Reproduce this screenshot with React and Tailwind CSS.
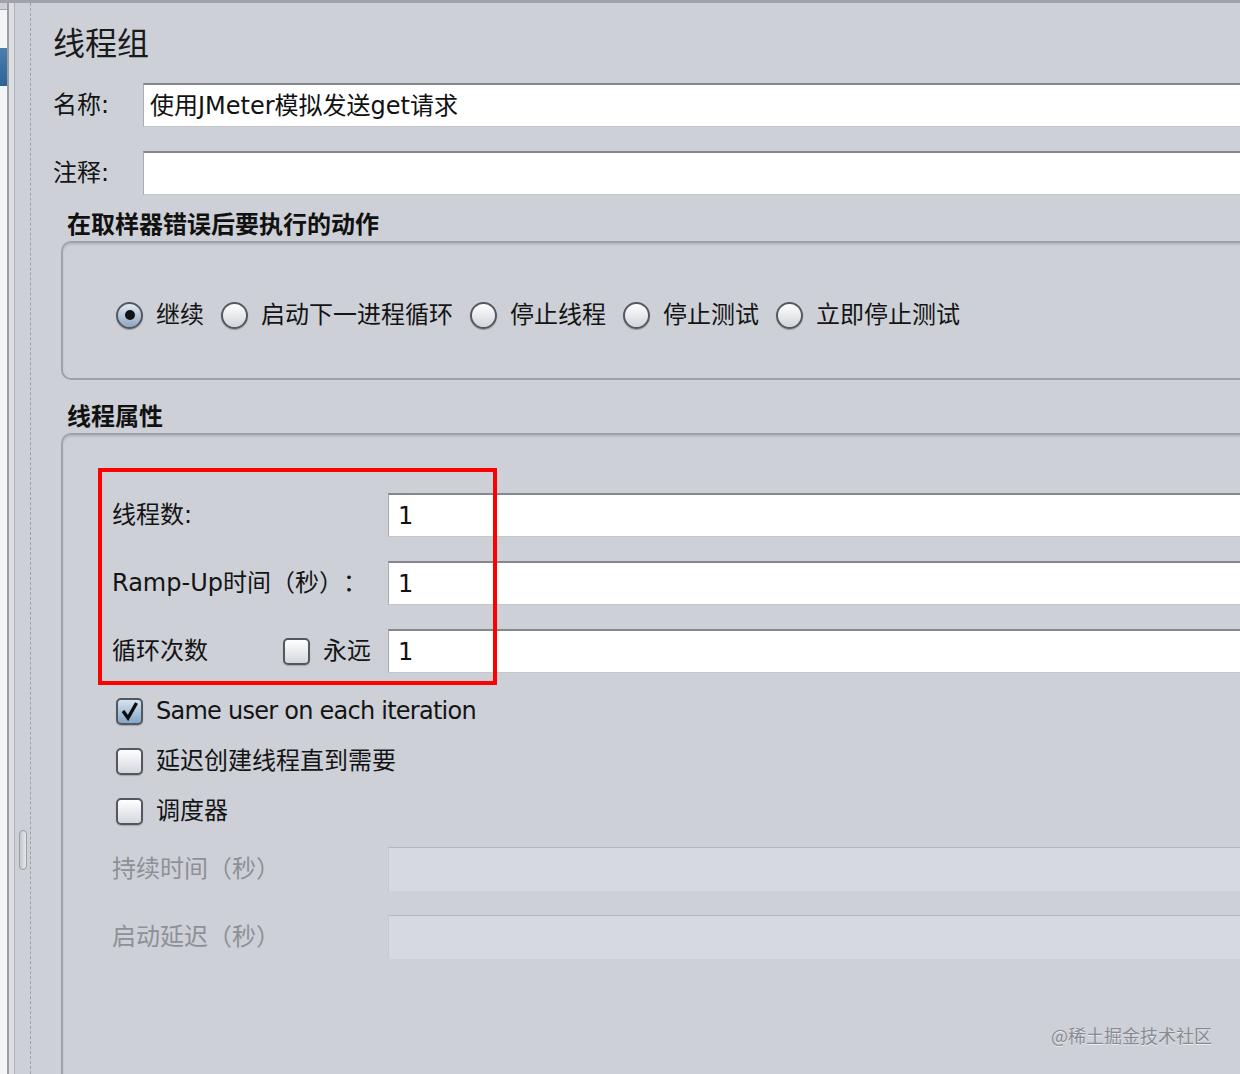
import React from "react";

function Radio({ checked }) {
  return (
    <span
      className={
        "w-[27px] h-[27px] shrink-0 rounded-full border-2 border-[#55585e] flex items-center justify-center shadow-[0_1px_1px_rgba(0,0,0,0.25)] bg-linear-to-b " +
        (checked ? "from-[#e2eaf3] to-[#8fa7c0]" : "from-white to-[#d2d5db]")
      }
    >
      {checked && <span className="w-[10px] h-[10px] rounded-full bg-[#121314]" />}
    </span>
  );
}

function Checkbox({ checked }) {
  return (
    <span
      className={
        "w-[27px] h-[27px] shrink-0 rounded-[5px] border-2 border-[#54575d] flex items-center justify-center shadow-[0_1px_1px_rgba(0,0,0,0.2)] bg-linear-to-b " +
        (checked ? "from-[#d6e3f0] to-[#86a6c7]" : "from-white to-[#d4d7dd]")
      }
    >
      {checked && (
        <svg width="20" height="20" viewBox="0 0 20 20">
          <path d="M3 10 L8 17 L16.5 2" fill="none" stroke="#0d0d0f" strokeWidth="3.4" strokeLinejoin="miter" />
        </svg>
      )}
    </span>
  );
}

function TextField({ value, pad = "pl-[9px]", disabled }) {
  if (disabled) {
    return (
      <div className="flex-1 -mr-[10px] h-[44px] bg-[#d6d9e0] border-t border-t-[#b4b7bd] border-l border-l-[#c6c9cf]" />
    );
  }
  return (
    <div
      className={
        "flex-1 -mr-[10px] h-[44px] bg-white border-t-2 border-t-[#84878d] border-l border-l-[#a9acb2] border-b border-b-[#c3c6cb] flex items-center text-[24px] text-[#111] leading-none " +
        pad
      }
    >
      {value}
    </div>
  );
}

function FieldRow({ label, value, disabled, extra, className = "" }) {
  return (
    <div className={"flex items-center h-[44px] " + className}>
      <div
        className={
          "w-[276px] shrink-0 flex items-center text-[24px] leading-none " +
          (disabled ? "text-[#8d9096]" : "text-[#141414]")
        }
      >
        {label}
        {extra}
      </div>
      <TextField value={value} disabled={disabled} />
    </div>
  );
}

function CheckRow({ checked, label, tight }) {
  return (
    <div className="h-[50px] flex items-center pl-[4px]">
      <Checkbox checked={checked} />
      <span
        className={
          "ml-[13px] text-[24px] leading-none text-[#141414] " +
          (tight ? "tracking-[-0.75px]" : "")
        }
      >
        {label}
      </span>
    </div>
  );
}

export default function App() {
  const options = ["继续", "启动下一进程循环", "停止线程", "停止测试", "立即停止测试"];

  return (
    <div className="w-[1240px] h-[1074px] overflow-hidden bg-[#cdd0d7] flex flex-col relative [text-spacing-trim:space-all] font-['DejaVu_Sans','Noto_Sans_CJK_SC',sans-serif]">
      {/* top edge */}
      <div className="h-[3px] shrink-0 bg-[#9fa2a8]" />

      <div className="flex-1 flex min-h-0">
        {/* tree edge on the left */}
        <div className="w-[7px] shrink-0 pt-[6px] flex flex-col">
          <div className="flex-1 bg-[#f4f5f7] border-t border-[#a4a7ad] flex flex-col">
            <div className="mt-[38px] h-[38px] bg-linear-to-b from-[#4b7fae] to-[#2d6496]" />
          </div>
        </div>
        <div className="w-[2px] shrink-0 bg-[#9a9da3]" />
        <div className="w-[5px] shrink-0 bg-[#dcdee2]" />
        <div className="w-px shrink-0 bg-[#b0b3b8]" />
        {/* splitter */}
        <div className="w-[15px] shrink-0 flex flex-col items-center pt-[827px]">
          <div className="w-[8px] h-[40px] rounded-full border border-[#9a9da3] bg-linear-to-r from-[#c3c6cc] to-[#e6e8eb]" />
        </div>
        <div className="w-px shrink-0 border-l border-dashed border-[#9da0a6]" />

        {/* main form */}
        <div className="flex-1 flex flex-col pl-[22px] pt-[19px] min-w-0">
          <div className="h-[44px] flex items-center text-[32px] leading-none text-[#1a1a1a]">
            线程组
          </div>

          <div className="mt-[17px] h-[44px] flex items-center">
            <div className="w-[90px] shrink-0 text-[24px] leading-none text-[#141414]">名称:</div>
            <TextField value="使用JMeter模拟发送get请求" pad="pl-[6px]" />
          </div>

          <div className="mt-[24px] h-[44px] flex items-center">
            <div className="w-[90px] shrink-0 text-[24px] leading-none text-[#141414]">注释:</div>
            <TextField value="" pad="pl-[6px]" />
          </div>

          <div className="mt-[14px] h-[32px] flex items-center pl-[14px] text-[24px] font-bold leading-none text-[#111]">
            在取样器错误后要执行的动作
          </div>

          <div className="ml-[8px] -mr-[20px] h-[139px] shrink-0 rounded-l-[10px] border-2 border-r-0 border-[#9ea1a7] shadow-[inset_0_2px_2px_rgba(0,0,0,0.1)] pl-[53px] pt-[58px]">
            <div className="h-[28px] flex items-center gap-[17px]">
              {options.map((o, i) => (
                <div key={o} className="flex items-center">
                  <Radio checked={i === 0} />
                  <span className="ml-[13px] text-[24px] leading-none text-[#141414]">{o}</span>
                </div>
              ))}
            </div>
          </div>

          <div className="mt-[21px] h-[32px] flex items-center pl-[14px] text-[24px] font-bold leading-none text-[#111]">
            线程属性
          </div>

          <div className="ml-[8px] -mr-[20px] flex-1 rounded-tl-[10px] border-t-2 border-l-2 border-[#9ea1a7] shadow-[inset_0_2px_2px_rgba(0,0,0,0.1)] pl-[49px] pt-[58px] flex flex-col">
            <FieldRow label="线程数:" value="1" />
            <FieldRow label="Ramp-Up时间（秒）：" value="1" className="mt-[24px]" />
            <FieldRow
              label="循环次数"
              value="1"
              className="mt-[24px]"
              extra={
                <span className="ml-[75px] flex items-center">
                  <Checkbox checked={false} />
                  <span className="ml-[13px]">永远</span>
                </span>
              }
            />

            <div className="mt-[13px] flex flex-col">
              <CheckRow checked label="Same user on each iteration" tight />
              <CheckRow checked={false} label="延迟创建线程直到需要" />
              <CheckRow checked={false} label="调度器" />
            </div>

            <FieldRow label="持续时间（秒）" disabled className="mt-[11px]" />
            <FieldRow label="启动延迟（秒）" disabled className="mt-[24px]" />
          </div>
        </div>
      </div>

      {/* red annotation box */}
      <div className="absolute left-[98px] top-[468px] w-[399px] h-[217px] border-4 border-[#ff0000] pointer-events-none" />

      {/* watermark */}
      <div className="absolute right-[28px] bottom-[30px] text-[18px] leading-none text-[#888b92] [text-shadow:0_1px_0_rgba(255,255,255,0.6)] font-['Noto_Sans_CJK_SC',sans-serif]">
        @稀土掘金技术社区
      </div>
    </div>
  );
}
